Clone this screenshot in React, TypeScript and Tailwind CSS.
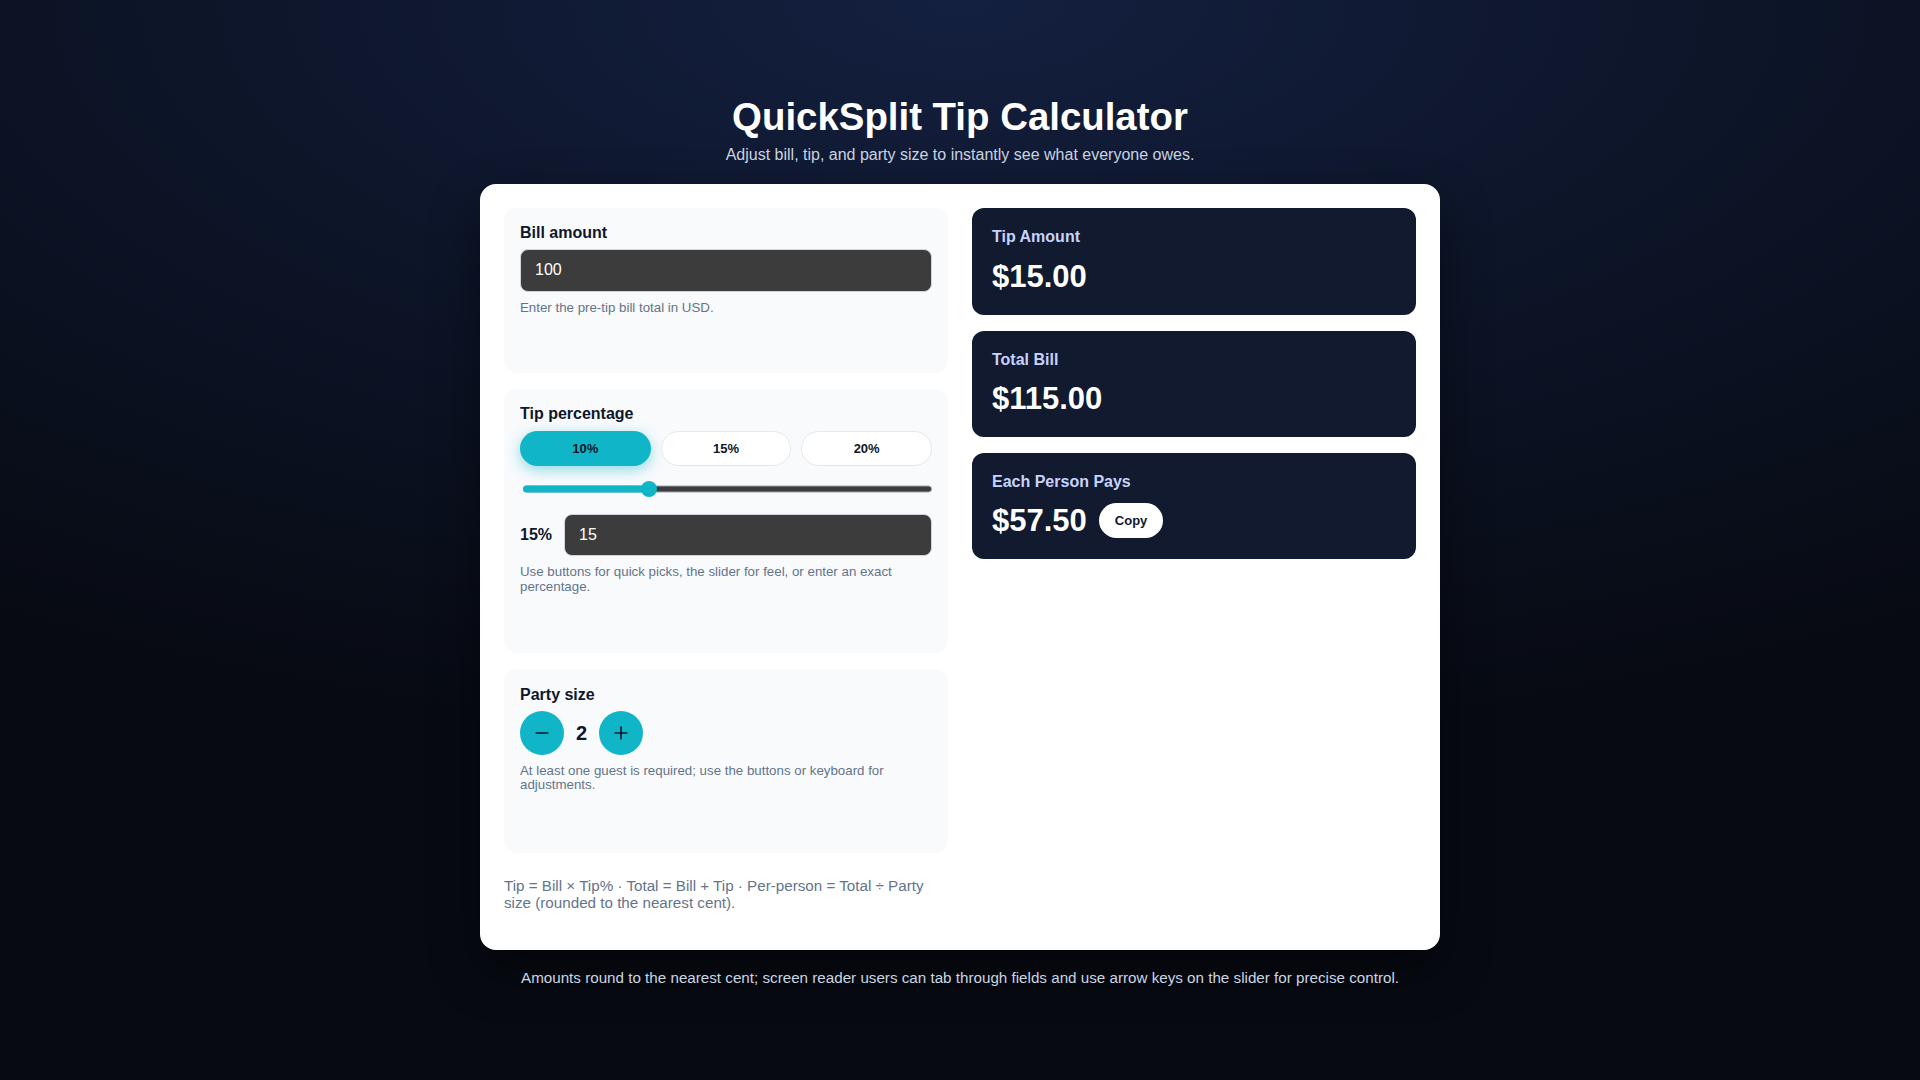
import { Minus, Plus } from "lucide-react";
import { useState } from "react";

const presets = [10, 15, 20];

function ResultCard({
  label,
  value,
  children,
}: {
  label: string;
  value: string;
  children?: React.ReactNode;
}) {
  return (
    <div className="rounded-xl bg-[#111a2e] p-5 flex flex-col gap-[12px]">
      <div className="text-[16px] font-bold leading-[1.15] text-[#c7d2fe]">{label}</div>
      <div className="flex items-center gap-3">
        <div className="text-[31px] font-bold leading-[1.15] text-white">{value}</div>
        {children}
      </div>
    </div>
  );
}

export default function App() {
  const [bill, setBill] = useState("100");
  const [tip, setTip] = useState(15);
  const [party, setParty] = useState(2);
  const [active] = useState(10);

  const billNum = parseFloat(bill) || 0;
  const tipAmt = Math.round(billNum * tip) / 100;
  const total = billNum + tipAmt;
  const each = Math.round((total / party) * 100) / 100;
  const frac = Math.min(Math.max(tip / 50, 0), 1);

  return (
    <div
      className="min-h-screen w-full bg-[radial-gradient(ellipse_90%_70%_at_50%_0%,#142040_0%,#0d1529_45%,#070a12_100%)] pt-[94px] pb-10 flex flex-col items-center"
      style={{ fontFamily: '"Liberation Sans", Arial, sans-serif' }}
    >
      {/* Header */}
      <h1 className="text-[38.4px] font-bold leading-[1.2] text-white">QuickSplit Tip Calculator</h1>
      <p className="mt-[6px] text-[16px] leading-[1.15] text-[#cbd5e1]">
        Adjust bill, tip, and party size to instantly see what everyone owes.
      </p>

      {/* Main card */}
      <div className="mt-[20px] w-[960px] rounded-2xl bg-white p-6 grid grid-cols-2 gap-6 items-start shadow-[0_20px_50px_rgba(0,0,0,0.45)]">
        {/* Inputs */}
        <div className="flex flex-col gap-4">
          <section className="rounded-xl bg-[#f8fafc] px-4 pt-4 pb-[58px] flex flex-col">
            <label className="text-[16px] font-bold leading-[1.15] text-[#0f172a]">Bill amount</label>
            <input
              value={bill}
              onChange={(e) => setBill(e.target.value)}
              className="mt-[6px] h-[43px] w-full rounded-lg border border-[#d1d5db] bg-[#3c3c3c] px-[14px] text-[16px] text-white outline-none"
            />
            <p className="mt-[9px] text-[13.3px] leading-[1.1] text-[#64748b]">Enter the pre-tip bill total in USD.</p>
          </section>

          <section className="rounded-xl bg-[#f8fafc] px-4 pt-4 pb-[59px] flex flex-col">
            <label className="text-[16px] font-bold leading-[1.15] text-[#0f172a]">Tip percentage</label>
            <div className="mt-[7px] grid grid-cols-3 gap-2.5">
              {presets.map((p) => (
                <button
                  key={p}
                  onClick={() => setTip(p)}
                  className={
                    p === active
                      ? "h-[35px] rounded-full bg-[#10b5c8] text-[13px] font-bold text-[#0f172a] shadow-[0_4px_14px_rgba(16,181,200,0.45)]"
                      : "h-[35px] rounded-full border border-[#e2e8f0] bg-white text-[13px] font-bold text-[#0f172a]"
                  }
                >
                  {p}%
                </button>
              ))}
            </div>
            {/* Slider */}
            <div className="relative mt-[7px] ml-[3px] h-[32px]">
              <div className="absolute left-0 right-0 top-1/2 h-[7px] -translate-y-1/2 rounded-full border border-[#9ca3af] bg-[#3c3c3c]" />
              <div className="absolute left-[8px] right-[8px] top-0 bottom-0">
                <div
                  className="absolute left-[-8px] top-1/2 h-[7px] -translate-y-1/2 rounded-l-full bg-[#10b5c8]"
                  style={{ width: `calc(${frac * 100}% + 8px)` }}
                />
                <div
                  className="absolute top-1/2 h-[16px] w-[16px] -translate-x-1/2 -translate-y-1/2 rounded-full bg-[#10b5c8]"
                  style={{ left: `${frac * 100}%` }}
                />
              </div>
            </div>
            <div className="mt-[9px] flex items-center gap-3">
              <span className="text-[16px] font-bold text-[#0f172a]">{tip}%</span>
              <input
                value={tip}
                onChange={(e) => setTip(Number(e.target.value) || 0)}
                className="h-[42px] flex-1 rounded-lg border border-[#d1d5db] bg-[#3c3c3c] px-[14px] text-[16px] text-white outline-none"
              />
            </div>
            <p className="mt-[9px] text-[13.3px] leading-[1.1] text-[#64748b]">
              Use buttons for quick picks, the slider for feel, or enter an exact percentage.
            </p>
          </section>

          <section className="rounded-xl bg-[#f8fafc] px-4 pt-[17px] pb-[60px] flex flex-col">
            <label className="text-[16px] font-bold leading-[1.15] text-[#0f172a]">Party size</label>
            <div className="mt-[6px] flex items-center gap-3">
              <button
                onClick={() => setParty(Math.max(1, party - 1))}
                className="flex h-[44px] w-[44px] items-center justify-center rounded-full bg-[#10b5c8] text-[#0f172a]"
                aria-label="Decrease"
              >
                <Minus size={20} strokeWidth={2} />
              </button>
              <span className="text-[20px] font-bold text-[#0f172a]">{party}</span>
              <button
                onClick={() => setParty(party + 1)}
                className="flex h-[44px] w-[44px] items-center justify-center rounded-full bg-[#10b5c8] text-[#0f172a]"
                aria-label="Increase"
              >
                <Plus size={20} strokeWidth={2} />
              </button>
            </div>
            <p className="mt-[9px] text-[13.3px] leading-[1.1] text-[#64748b]">
              At least one guest is required; use the buttons or keyboard for adjustments.
            </p>
          </section>

          <p className="mt-[8px] mb-[15px] text-[15.2px] leading-[1.13] text-[#64748b]">
            Tip = Bill × Tip% · Total = Bill + Tip · Per-person = Total ÷ Party size (rounded to the nearest cent).
          </p>
        </div>

        {/* Results */}
        <div className="flex flex-col gap-4">
          <ResultCard label="Tip Amount" value={`$${tipAmt.toFixed(2)}`} />
          <ResultCard label="Total Bill" value={`$${total.toFixed(2)}`} />
          <ResultCard label="Each Person Pays" value={`$${each.toFixed(2)}`}>
            <button className="h-[35px] rounded-full bg-white px-4 text-[13px] font-bold text-[#0f172a]">
              Copy
            </button>
          </ResultCard>
        </div>
      </div>

      <p className="mt-[19px] text-[15.2px] leading-[1.15] text-[#cbd5e1]">
        Amounts round to the nearest cent; screen reader users can tab through fields and use arrow keys on the slider for precise control.
      </p>
    </div>
  );
}
